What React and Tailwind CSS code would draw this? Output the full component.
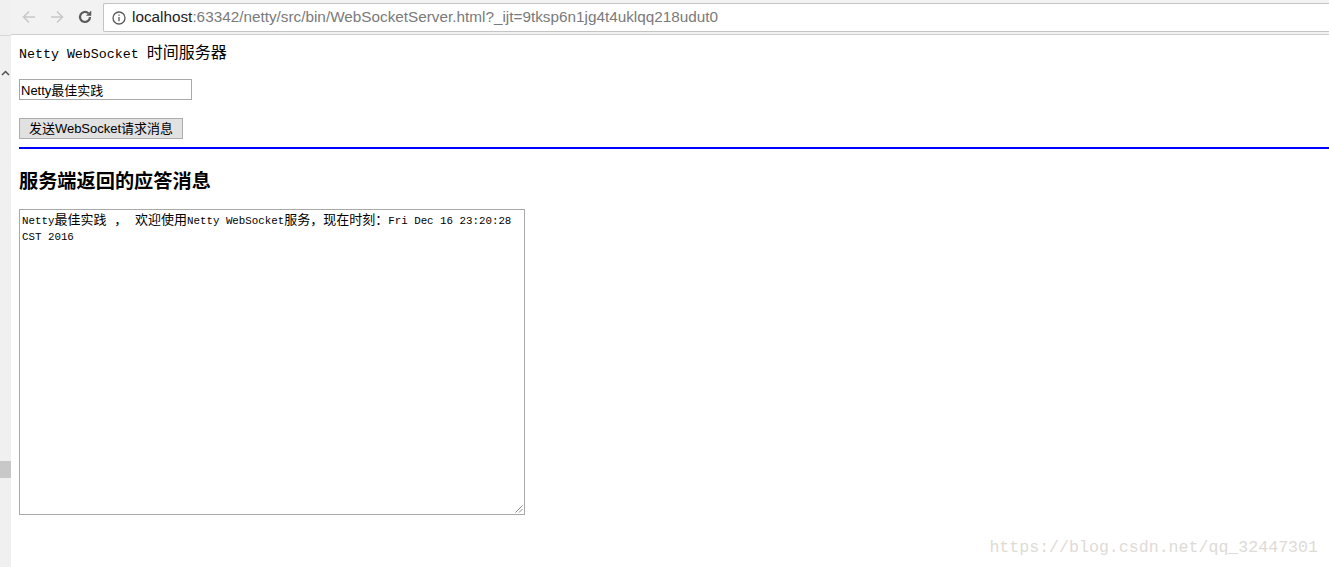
import React from 'react';

const mono = { fontFamily: '"Liberation Mono", "Noto Sans CJK SC", monospace' };
const cjk = { fontFamily: '"Noto Sans CJK SC", sans-serif' };

function Toolbar() {
  return (
    <div className="h-[35px] flex items-center bg-[#f2f2f2] border-b border-[#cfcfcf]">
      <div className="w-[92px] flex items-center shrink-0">
        <svg className="ml-[10px]" width="16" height="16" viewBox="0 0 16 16" fill="none" stroke="#c8c8c8" strokeWidth="1.6">
          <path d="M14 8H2.5M8 2.5L2.5 8L8 13.5" />
        </svg>
        <svg className="ml-[12px]" width="16" height="16" viewBox="0 0 16 16" fill="none" stroke="#c8c8c8" strokeWidth="1.6">
          <path d="M2 8h11.5M8 2.5L13.5 8L8 13.5" />
        </svg>
        <svg className="ml-[12px]" width="16" height="16" viewBox="0 0 16 16" fill="none" stroke="#5a5a5a" strokeWidth="2.2">
          <path d="M13 8a5 5 0 1 1-1.6-3.7" />
          <path d="M14 2v4.5H9.5z" fill="#5a5a5a" strokeWidth="0.5" />
        </svg>
      </div>
      <div className="flex-1 h-[29px] mt-[1px] flex items-center bg-white border border-r-0 border-[#c4c4c4] rounded-l-[2px] text-[15.3px]" style={{ fontFamily: '"Liberation Sans", Arial, sans-serif' }}>
        <svg className="ml-[8px] mr-[6px]" width="14" height="14" viewBox="0 0 14 14" fill="none" stroke="#5a5a5a" strokeWidth="1.3">
          <circle cx="7" cy="7" r="6" />
          <path d="M7 6v4.2M7 3.6v1.2" />
        </svg>
        <span className="text-[#222]">localhost</span>
        <span className="text-[#7a7a7a]">:63342/netty/src/bin/WebSocketServer.html?_ijt=9tksp6n1jg4t4uklqq218udut0</span>
      </div>
    </div>
  );
}

export default function App() {
  return (
    <div className="relative w-[1329px] h-[567px] overflow-hidden bg-white flex">
      <div className="w-[11px] shrink-0 bg-[#f0f0f0] flex flex-col">
        <div className="h-[36px] border-b border-[#d8d8d8]" />
        <div className="h-[40px] flex items-end justify-center">
          <svg width="9" height="6" viewBox="0 0 9 6" fill="none" stroke="#505050" strokeWidth="1.5">
            <path d="M1 5l3.5-3.5L8 5" />
          </svg>
        </div>
        <div className="mt-[385px] h-[17px] bg-[#c8c8c8]" />
      </div>

      <div className="flex-1 flex flex-col">
        <Toolbar />
        <div className="pl-[8px] flex flex-col">
          <div className="mt-[6px] h-[20px] leading-[20px] text-[13.3px] text-black" style={mono}>
            Netty WebSocket <span className="text-[16px] leading-[20px]" style={cjk}>时间服务器</span>
          </div>

          <input
            className="mt-[18px] w-[173px] h-[21px] px-[1px] border border-[#a9a9a9] text-[13px] text-black outline-none"
            style={{ fontFamily: '"Liberation Sans", "Noto Sans CJK SC", sans-serif' }}
            defaultValue="Netty最佳实践"
          />

          <div>
            <button
              className="mt-[18px] w-[164px] h-[21px] border border-[#adadad] bg-[#e1e1e1] text-[13px] text-black leading-none"
              style={{ fontFamily: '"Liberation Sans", "Noto Sans CJK SC", sans-serif' }}
            >
              发送WebSocket请求消息
            </button>
          </div>

          <div className="mt-[8px] h-[2px] bg-[#0000ff]" />

          <h3 className="mt-[20px] h-[22px] leading-[22px] text-[19.2px] font-bold text-black" style={{ fontFamily: '"Noto Sans CJK SC", serif' }}>
            服务端返回的应答消息
          </h3>

          <div className="relative mt-[18px] w-[506px] h-[306px] border border-[#a9a9a9] px-[2px] pt-[3px] text-[10.8px] leading-[16px] text-black" style={mono}>
            <div className="whitespace-nowrap h-[16px]">
              Netty<span className="text-[13px] leading-[16px]">最佳实践 ， 欢迎使用</span>Netty WebSocket<span className="text-[13px] leading-[16px]">服务，现在时刻：</span>Fri Dec 16 23:20:28
            </div>
            <div>CST 2016</div>
            <svg className="absolute right-[1px] bottom-[1px]" width="9" height="9" viewBox="0 0 9 9" stroke="#8a8a8a" strokeWidth="1">
              <path d="M8.5 1.5L1.5 8.5M8.5 5L5 8.5" />
            </svg>
          </div>
        </div>
      </div>

      <div className="absolute right-[11px] bottom-[9px] text-[16.6px] text-[#dedbd6] leading-[20px]" style={{ fontFamily: '"Liberation Mono", monospace' }}>
        https://blog.csdn.net/qq_32447301
      </div>
    </div>
  );
}
